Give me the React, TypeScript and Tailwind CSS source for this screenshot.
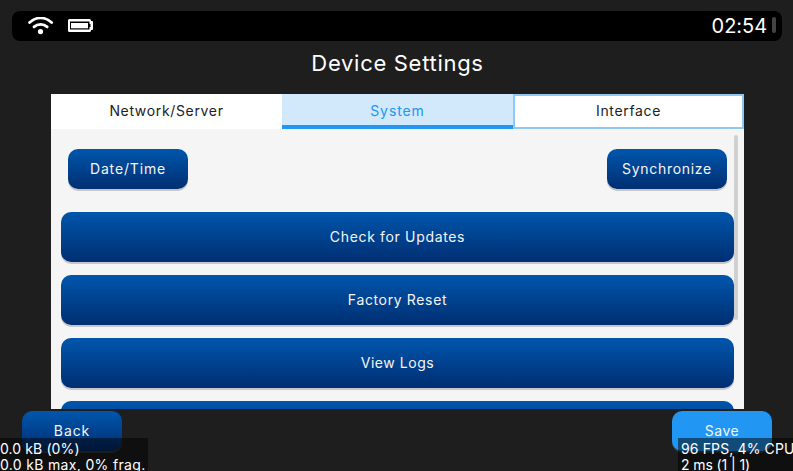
import type { ReactNode } from 'react';

const blue =
  'flex shrink-0 items-center justify-center rounded-[10px] bg-linear-to-b from-[#0056ad] to-[#002f72] text-[#f5f5f5]';

function Label({ children, className = '' }: { children: ReactNode; className?: string }) {
  return <span className={`whitespace-pre text-[14px] leading-4 ${className}`}>{children}</span>;
}

function WideButton({ children }: { children?: ReactNode }) {
  return (
    <button className={`${blue} h-[50px] w-[673px] shadow-[0_2px_0_#c9c6ca]`}>{children}</button>
  );
}

function StatusBar() {
  return (
    <header className="ml-3 flex h-[30px] w-[770px] items-center rounded-lg bg-black text-white">
      <svg className="ml-4 h-[18px] w-[26px]" viewBox="0 0 26 18" fill="none" stroke="white" strokeLinecap="round">
        <path d="M1.6 5.6C8-.6 17.2-.6 23.6 5.6" strokeWidth="2.8" />
        <path d="M6 9.9C9.8 6.5 15.4 6.5 19.2 9.9" strokeWidth="2.8" />
        <circle cx="12.5" cy="14.6" r="2.6" fill="white" stroke="none" />
      </svg>
      <svg className="mb-px ml-3.5 h-[13px] w-[26px]" viewBox="0 0 26 13">
        <path
          fill="white"
          fillRule="evenodd"
          d="M1.5 0H21.5A1.5 1.5 0 0 1 23 1.5V2H24A1 1 0 0 1 25 3V10A1 1 0 0 1 24 11H23V11.5A1.5 1.5 0 0 1 21.5 13H1.5A1.5 1.5 0 0 1 0 11.5V1.5A1.5 1.5 0 0 1 1.5 0ZM2 2.5V10.5H21.5V8H22.5V5H21.5V2.5Z"
        />
        <path fill="white" d="M3 4H20V9.3H3Z" />
      </svg>
      <span className="ml-auto text-[20px] leading-6 tracking-[-0.05px]">02:54</span>
      <i className="mr-1.5 mb-0.5 ml-[5px] h-4 w-1 rounded-full bg-[#444]" />
    </header>
  );
}

export default function App() {
  return (
    <div className="relative flex h-[471px] w-[793px] flex-col overflow-hidden bg-[#1e1e1e] pt-[11px] font-[Inter,sans-serif]">
      <StatusBar />
      <h1 className="flex h-[53px] items-center justify-center pb-[9px] pl-0.5 text-[22px] text-white">
        <span className="tracking-[0.7px]">Device Settings</span>
      </h1>
      <main className="relative ml-[51px] h-[315px] w-[693px] shrink-0 overflow-hidden bg-[#f5f5f5]">
        <nav className="grid h-[35px] grid-cols-3 text-[#212121]">
          <button className="flex items-center justify-center bg-white pb-0.5"><Label className="tracking-[0.66px]">Network/Server</Label></button>
          <button className="flex items-center justify-center border-b-4 border-[#2196f3] bg-[#d2e8fb] pt-0.5 text-[#2196f3]"><Label className="tracking-[0.9px]">System</Label></button>
          <button className="flex items-center justify-center border-2 border-[#8fc8f5] bg-white pb-0.5"><Label className="tracking-[0.66px]">Interface</Label></button>
        </nav>
        <div className="flex justify-between pt-5 pr-[17px] pl-[17px]">
          <button className={`${blue} h-10 w-[120px] shadow-[0_2px_0_#c9c6ca]`}><Label className="tracking-[0.85px]">Date/Time</Label></button>
          <button className={`${blue} h-10 w-[120px] shadow-[0_2px_0_#c9c6ca]`}><Label className="tracking-[0.7px]">Synchronize</Label></button>
        </div>
        <div className="mt-[23px] ml-2.5 flex flex-col gap-[13px]">
          <WideButton><Label className="tracking-[0.66px]">Check for Updates</Label></WideButton>
          <WideButton><Label className="tracking-[0.64px]">Factory Reset</Label></WideButton>
          <WideButton><Label className="tracking-[0.55px]">View Logs</Label></WideButton>
          <WideButton />
        </div>
        <i className="absolute top-[41px] right-1.5 h-[185px] w-1 rounded-full bg-[#d0d0d0]" />
      </main>
      <footer className="mt-0.5 flex justify-between pr-[21px] pl-[22px] text-[#f5f5f5]">
        <button className={`${blue} h-10 w-[100px] shadow-[0_2px_0_#393739]`}><Label className="tracking-[0.9px]">Back</Label></button>
        <button className="flex h-10 w-[100px] items-center justify-center rounded-[10px] bg-[#2196f3] shadow-[0_2px_0_#393739]"><Label className="tracking-[0.5px]">Save</Label></button>
      </footer>
      <aside className="absolute top-[438px] left-0 flex h-[33px] w-[148px] flex-col bg-black/50 pt-[3px] text-white">
        <Label className="tracking-[0.1px]">0.0 kB (0%)</Label>
        <Label className="tracking-[0.33px]">0.0 kB max, 0% frag.</Label>
      </aside>
      <aside className="absolute top-[438px] left-[678px] flex h-[33px] w-[115px] flex-col bg-black/50 pt-[3px] pl-[3px] text-white">
        <Label className="tracking-[0.13px]">96 FPS, 4% CPU</Label>
        <Label className="tracking-[-0.1px]">2 ms (1 | 1)</Label>
      </aside>
    </div>
  );
}
